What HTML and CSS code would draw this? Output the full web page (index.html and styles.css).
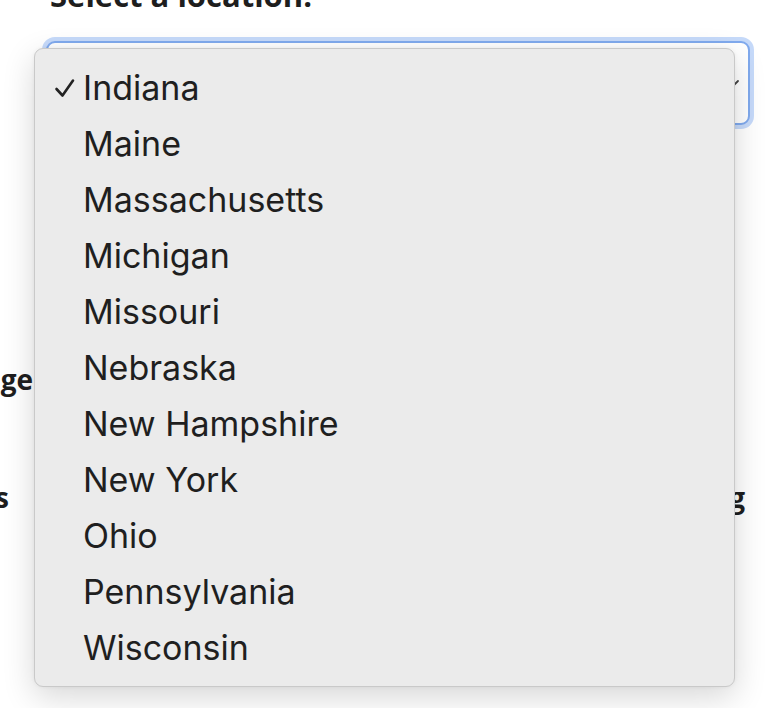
FILE: index.html
```html
<!DOCTYPE html>
<html lang="en">
<head>
    <meta charset="UTF-8">
    <meta name="viewport" content="width=device-width, initial-scale=1.0">
    <title>Select a location</title>
    <link rel="stylesheet" href="styles.css">
</head>
<body>
    <h2 class="title">Select a location:</h2>

    <div class="field">
        <div class="select">
            <svg class="chevron" width="14" height="10" viewBox="0 0 14 10">
                <polyline points="2,2 7,7 12,2" fill="none" stroke="#444" stroke-width="1.8" stroke-linecap="round" stroke-linejoin="round"/>
            </svg>
        </div>

        <ul class="menu">
            <li class="selected">
                <svg class="check" width="22" height="22" viewBox="0 0 22 22">
                    <polyline points="2.5,12 8.5,18.5 19,3.5" fill="none" stroke="#222" stroke-width="2.6" stroke-linecap="round" stroke-linejoin="round"/>
                </svg>
                Indiana
            </li>
            <li>Maine</li>
            <li>Massachusetts</li>
            <li>Michigan</li>
            <li>Missouri</li>
            <li>Nebraska</li>
            <li>New Hampshire</li>
            <li>New York</li>
            <li>Ohio</li>
            <li>Pennsylvania</li>
            <li>Wisconsin</li>
        </ul>
    </div>

    <div class="row row-first">
        <label class="label label-left-wide">Language</label>
    </div>
    <div class="row row-second">
        <label class="label label-left">Interests</label>
        <label class="label label-right">Housing</label>
    </div>
</body>
</html>
```

FILE: styles.css
```css
html, body {
    height: 100%;
}
body {
    margin: 0;
    padding: 0;
    background-color: #fff;
    font-family: 'Open Sans', sans-serif;
    color: #1e1e1e;
}
.title {
    margin: -22px 0 0 50px;
    font-size: 31px;
    line-height: 34px;
    font-weight: 700;
    white-space: nowrap;
}
.field {
    position: relative;
    margin: 29px 0 0 46px;
    width: 704px;
}
.select {
    box-sizing: border-box;
    height: 84px;
    border: 2px solid #80aaee;
    border-radius: 9px;
    background: #fff;
    box-shadow: 0 0 0 4px #c6dafa;
    display: flex;
    align-items: center;
    justify-content: flex-end;
    padding-right: 8px;
}
.chevron {
    margin-top: 2px;
}
.menu {
    position: absolute;
    top: 7px;
    left: -12px;
    width: 701px;
    box-sizing: border-box;
    margin: 0;
    padding: 11px 0 10px 48px;
    list-style: none;
    background-color: #ebebeb;
    border: 1px solid #c9c9c9;
    border-radius: 9px;
    box-shadow: 0 10px 32px rgba(0, 0, 0, 0.16), 0 0 4px rgba(0, 0, 0, 0.05);
    font-family: 'Inter', sans-serif;
    font-size: 34px;
    line-height: 56px;
    color: #1f1f1f;
    z-index: 10;
}
.menu li {
    position: relative;
    height: 56px;
    white-space: nowrap;
}
.check {
    position: absolute;
    left: -29px;
    top: 17px;
}
.row {
    display: flex;
    justify-content: space-between;
}
.row-first {
    margin-top: 239px;
}
.row-second {
    margin-top: 88px;
}
.label {
    font-size: 28px;
    line-height: 30px;
    font-weight: 700;
    text-align: right;
    white-space: nowrap;
}
.label-left-wide {
    margin-left: -167px;
    width: 200px;
}
.label-left {
    margin-left: -191px;
    width: 200px;
}
.label-right {
    margin-right: 25px;
}
```
